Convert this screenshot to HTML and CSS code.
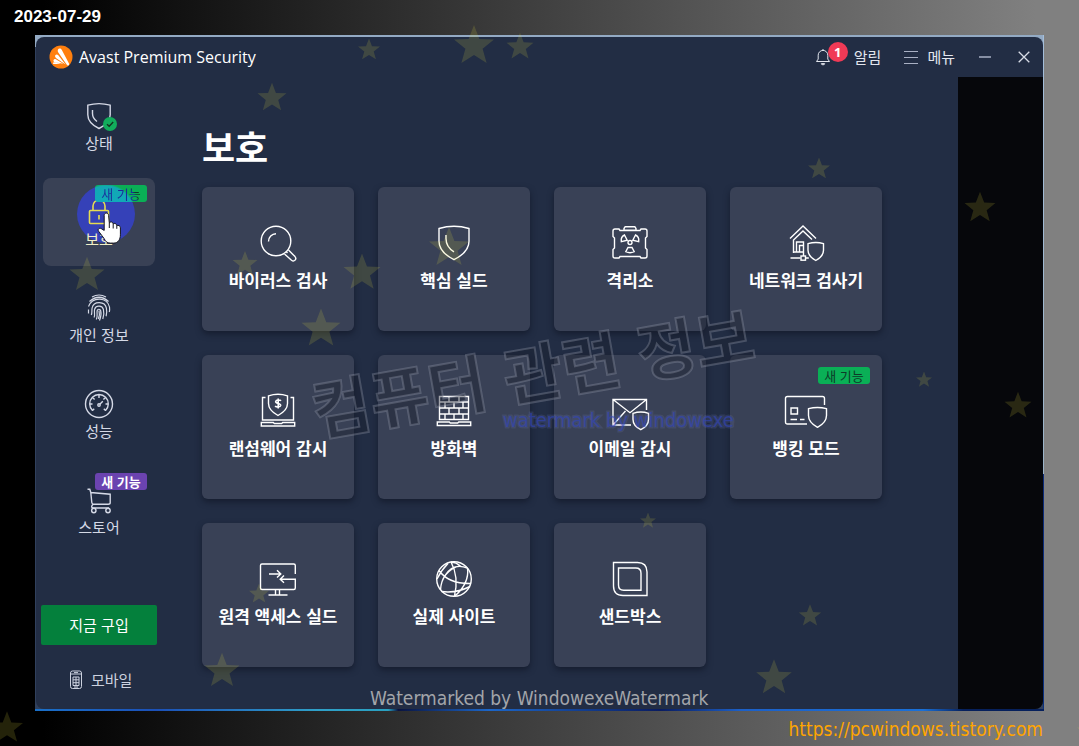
FILE: index.html
```html
<!DOCTYPE html>
<html lang="ko">
<head>
<meta charset="utf-8">
<title>Avast Premium Security</title>
<link rel="stylesheet" href="styles.css">
</head>
<body>
<header class="datebar"><time datetime="2023-07-29">2023-07-29</time></header>

<div class="frame">
<div class="window">
  <div class="titlebar">
    <svg class="logo" viewBox="0 0 24 24"><circle cx="12" cy="12" r="11.5" fill="#ff7f0e"/><path d="M9 4.600c.6-1.500 2.900-1.500 3.700.1l7.300 13.900c.8 1.600-1 2.400-2 1.300L9.300 7.500C8.700 6.600 8.600 5.500 9 4.600z" fill="#fff"/><path d="M6.300 10.300c.7-1 2-1 2.800-.2l7.400 9.300-9.200-6.200c-1-.7-1.600-1.900-1-2.900z" fill="#fff"/><path d="M4.600 14.900c.4-.8 1.300-1 2.200-.7l7.500 4.500-8.300-1.500c-1.200-.3-1.900-1.300-1.400-2.300z" fill="#fff"/><path d="M3.800 17.800c.6-.8 4.200-.7 7.800.7-2.800.5-5.900.6-7.200.6z" fill="#fff"/></svg>
    <span class="app-name">Avast Premium Security</span>
    <div class="tools">
      <button class="tool alerts">
        <svg class="bell" viewBox="0 0 16 18"><path d="M1.500 13.500h13l-1.700-2.400V7.200a4.800 4.800 0 0 0-9.600 0v3.900zM8 2.400V1M6.300 15.600a1.700 1.200 0 0 0 3.400 0z"/></svg>
        <span class="count">1</span>
        <span>알림</span>
      </button>
      <button class="tool menu"><svg class="bars" viewBox="0 0 14 14"><path d="M0 1.500h14M0 7.500h14M0 13.500h14"/></svg><span>메뉴</span></button>
      <button class="tool" aria-label="최소화"><svg class="sys" viewBox="0 0 12 12"><path d="M0 6h12"/></svg></button>
      <button class="tool" aria-label="닫기"><svg class="sys close" viewBox="0 0 12 12"><path d="M.7.7l10.600 10.600M11.300.7L.7 11.300"/></svg></button>
    </div>
  </div>

  <div class="body">
    <aside class="sidebar">
      <nav class="nav">
        <a class="item" href="#status">
          <svg class="nav-icon" viewBox="0 0 32 32"><path d="M4.800 5.200q11.200-3.200 22.400 0v9.500c0 6-4.700 10.600-11.200 13.800C9.500 25.300 4.800 20.700 4.800 14.700zM9.500 10v3.500c0 3.500 1.800 6 4.500 8"/><circle class="ok" cx="27" cy="24" r="7"/><path class="tick" d="M24 24.200l2.200 2 4-4.200"/></svg>
          <span>상태</span>
        </a>
        <a class="item active" href="#protection">
          <i class="halo"></i>
          <svg class="nav-icon lock" viewBox="0 0 32 32"><rect x="6.500" y="14.500" width="19" height="13" rx="1"/><path d="M10 14.500V10a6 6 0 0 1 12 0v4.500M16 19v4.500"/></svg>
          <span class="active-label">보호</span>
          <b class="badge lit"><span>새 기능</span></b>
          <svg class="pointer" viewBox="0 0 26 33"><path d="M7.200 18.400V3.500C7.200.3 11.300.3 11.600 3.300l.7 7.600c.8-1.500 3.700-1.200 3.900 1 1.200-1 3.500-.4 3.500 1.700 1.500-.8 3.700.1 3.700 2.200v7c0 4.700-2.400 8.300-6.700 8.300h-3.200c-3.700 0-5-1.800-6.500-4.700L1.600 19.200c-1.300-2 .8-3.700 2.700-2.500z"/><path class="knuckle" d="M12.300 11v5M16.200 12v4.500M19.800 13.800v3"/></svg>
        </a>
        <a class="item" href="#privacy">
          <svg class="nav-icon print" viewBox="0 0 32 32"><path d="M9 5q7-4 14 0M6.500 9.500q9.500-8.500 19 0M5.500 14.500c4-10.500 19-9.500 21 .5.200 1.500.2 3.500-.2 5M5.500 17.500v4M8.300 23c1-2 .3-4.500.8-7 1.600-7.500 13-7 14.300.2.600 3.200.4 5.800-.3 8M11 25.500c1.500-2.500-.3-5.500.7-8.500 1.500-4.200 7.700-3.600 8.700.4 1 4 .5 6.500-.6 9.600M13.300 27.500c1.800-3 .2-6 .9-9 .5-1.800 3-1.600 3.500.2.800 3.300.3 6.300-1.200 9.800M16 18.500c.8 3 .5 6-.7 8.500"/></svg>
          <span>개인 정보</span>
        </a>
        <a class="item" href="#performance">
          <svg class="nav-icon" viewBox="0 0 32 32"><circle cx="16" cy="16" r="13.500"/><path d="M9.500 22.500a9.300 9.300 0 1 1 13 0M16 7v3M9.600 9.600l2 2M22.400 9.600l-2 2M6.800 16h2.700M25.200 16h-2.700M9.500 22.500l1.700-1.700M22.500 22.500l-1.700-1.700M16.800 16.300l3-3"/><circle cx="16" cy="17" r="1.200"/></svg>
          <span>성능</span>
        </a>
        <a class="item" href="#store">
          <svg class="nav-icon" viewBox="0 0 32 32"><path d="M4.500 5.300h2.300l1 3.200 19.400 1.700v8.500q0 1.500-2 1.500H10.500q-1.500 0-1.700-1.700L7.800 8.500M10 20.200q-3 3.500.5 3.800H26"/><circle cx="10.800" cy="26.500" r="2.200"/><circle cx="25" cy="26.500" r="2.200"/></svg>
          <span>스토어</span>
          <b class="badge violet">새 기능</b>
        </a>
      </nav>
      <button class="buy">지금 구입</button>
      <a class="mobile" href="#mobile">
        <svg class="phone" viewBox="0 0 14 20"><rect x="1.500" y="1" width="11" height="17.500" rx="2"/><path d="M2 4h10M4 7h6v8.500H4zM4 9.800h6M4 12.700h6M7 7v8.500M5 2.600h4M5 17h4"/></svg>
        <span>모바일</span>
      </a>
    </aside>

    <main class="main">
      <h1>보호</h1>
      <div class="cards">
        <button class="card">
          <svg class="icon" viewBox="0 0 40 40"><circle cx="18" cy="18" r="14.800"/><path d="M10.500 18.500a7.800 7.800 0 0 1 7.500-7.800M26.500 31l7 6.300c2.700 2 5.700-1.200 3.500-3.700L30.500 27M28 28.500l1.500 1.500"/></svg>
          <span>바이러스 검사</span>
        </button>
        <button class="card">
          <svg class="icon" viewBox="0 0 40 40"><path d="M5 5.500q15-4.500 30 0v12.800c0 8-6.300 14-15 18.300C11.300 32.300 5 26.300 5 18.300zM12 12v3.500c0 6 3.300 10.500 8 13.300"/></svg>
          <span>핵심 실드</span>
        </button>
        <button class="card">
          <svg class="icon" viewBox="0 0 40 40"><path d="M14 5.500l1.200-1.800h9.600L26 5.500v1.700H14zM10 7.500h20l1-1.500h4q2 0 2 2v5.500l-1.500 1.500v10l1.500 1.500V33q0 2-2 2h-4l-1-1.500H10L9 35H5q-2 0-2-2v-6.500L4.500 25V15L3 13.500V8q0-2 2-2h4z"/><circle cx="20" cy="19.500" r="2"/><path d="M14.500 12l2.700 5.200-5.900 1.500c-.5-3 .7-5.500 3.200-6.700zM25.500 12l-2.700 5.200 5.900 1.500c.5-3-.7-5.500-3.200-6.700zM18 24.500h4l2.200 4.200q-4.200 2-8.400 0z"/></svg>
          <span>격리소</span>
        </button>
        <button class="card">
          <svg class="icon" viewBox="0 0 40 40"><path d="M4 15.500L17 3l13 12.500M7.500 30V17L17 8l9 8.500M7.500 29H18M10.500 29V19h7v10M13.500 29v-6.500h3.800M17.500 29v4M4.500 35h10M19.800 35h3"/><rect x="15" y="33" width="4.500" height="4.200"/><path d="M22 20.700q8-2.500 15.500 0v6.500c0 4.500-3 7.800-7.700 10.300-4.700-2.500-7.800-5.800-7.800-10.300z"/></svg>
          <span>네트워크 검사기</span>
        </button>
        <button class="card">
          <svg class="icon" viewBox="0 0 40 40"><path d="M7.500 6.500H4.500V29h31V6.500h-3M10.500 4.800q9.500-3 19 0v7.700c0 5.300-4 9-9.500 12-5.500-3-9.500-6.700-9.500-12zM3.300 31.500h12l1 1h7.400l1-1h12V35H3.300z"/><path class="heavy" d="M23 9.800c-.8-1-4.800-1.300-5.300.6-.5 2.500 5.200 1.600 5 4-.3 2-4.500 1.900-5.600.5M20.200 7.500v10"/></svg>
          <span>랜섬웨어 감시</span>
        </button>
        <button class="card">
          <svg class="icon" viewBox="0 0 40 40"><path d="M5.500 5.500h29v23h-29zM5.500 11h29M5.500 17h29M5.500 23h29M15 5.500V11M25 5.500V11M11 11v6M20 11v6M29 11v6M15 17v6M25 17v6M11 23v5.500M20 23v5.500M29 23v5.500M3.300 31h12l1 1h7.400l1-1h12v3.500H3.300z"/></svg>
          <span>방화벽</span>
        </button>
        <button class="card">
          <svg class="icon" viewBox="0 0 40 40"><path d="M21 34H3V8.500h33.500V19M3 8.500l17 13.200L36.500 8.500M3 34l12.500-14"/><path d="M23 22.300q8-2.500 15.500 0v6.200c0 4.500-3 7.800-7.700 10.200C26 36.300 23 33 23 28.500z"/></svg>
          <span>이메일 감시</span>
        </button>
        <button class="card">
          <svg class="icon wide" viewBox="0 0 44 40"><path d="M23 33H3.500q-2 0-2-2V7.500q0-2 2-2h35q2 0 2 2V14M7 17h6.500v6H7zM6.500 28.500H13M16 28.500h4.500"/><path d="M24.500 17.700q9-2.500 18 0v6.800c0 5.300-3.800 9-9 11.800-5.200-2.800-9-6.500-9-11.800z"/></svg>
          <span>뱅킹 모드</span>
          <b class="badge green">새 기능</b>
        </button>
        <button class="card">
          <svg class="icon" viewBox="0 0 40 40"><path d="M37.300 15V6.500q0-1.500-1.500-1.500H4q-1.500 0-1.500 1.500V29q0 1.500 1.500 1.500h31.800q1.500 0 1.500-1.500v-8.800H22.500M26 16.500l-3.800 3.700 3.800 3.600M11 15h11.500M19 11.300l3.800 3.700-3.800 3.600M17.500 30.500v5M21.500 30.500v5M10.500 36h19"/></svg>
          <span>원격 액세스 실드</span>
        </button>
        <button class="card">
          <svg class="icon" viewBox="0 0 40 40"><circle cx="20" cy="20" r="17.300"/><path d="M17 3q8 14.500 3.500 34.200M17 3q5.500.5 9 3.700Q7.500 12.500 6.500 31M33.500 9Q19 3.500 11 16.500M5 11.500Q14.500 25 37 24.500M36 27.500q-14 7-28.500 5M33.500 9q2 15-12.500 28M3 20q4-8.500 11-15.500"/></svg>
          <span>실제 사이트</span>
        </button>
        <button class="card">
          <svg class="icon" viewBox="0 0 40 40"><path d="M3.500 3.500h24q9.500 0 9.500 9.500v23.500H13q-9.500 0-9.500-9.500z"/><path d="M8.500 9h17.300q5.200 0 5.200 5.200v17H13.700q-5.200 0-5.200-5.200z"/></svg>
          <span>샌드박스</span>
        </button>
      </div>
    </main>
    <div class="shade"></div>
  </div>
</div>
</div>

<footer class="source"><a href="https://pcwindows.tistory.com">https://pcwindows.tistory.com</a></footer>

<svg class="overlay" width="1079" height="746" viewBox="0 0 1079 746">
  <defs><path id="star" d="M0-10.500L2.700-3.500 10-3.200 4.300 1.400 6.300 8.500 0 4.500-6.300 8.500-4.300 1.400-10-3.200-2.700-3.500z"/></defs>
  <g class="stars">
    <use href="#star" transform="translate(369 50) scale(1.100)"/>
    <use href="#star" transform="translate(474 46) scale(2)"/>
    <use href="#star" transform="translate(520 47) scale(1.350)"/>
    <use href="#star" transform="translate(272 98) scale(1.450)"/>
    <use href="#star" transform="translate(819 169) scale(1.100)"/>
    <use href="#star" transform="translate(980 208) scale(1.550)"/>
    <use href="#star" transform="translate(87 275) scale(1.750)"/>
    <use href="#star" transform="translate(245 264) scale(1.250)"/>
    <use href="#star" transform="translate(362 273) scale(1.850)"/>
    <use href="#star" transform="translate(321 329) scale(1.950)"/>
    <use href="#star" transform="translate(449 248) scale(2)"/>
    <use href="#star" transform="translate(924 380) scale(.8)"/>
    <use href="#star" transform="translate(1018 406) scale(1.350)"/>
    <use href="#star" transform="translate(648 521) scale(.8)"/>
    <use href="#star" transform="translate(259 594) scale(1)"/>
    <use href="#star" transform="translate(222 671) scale(1.750)"/>
    <use href="#star" transform="translate(810 616) scale(1.120)"/>
    <use href="#star" transform="translate(774 678) scale(1.780)"/>
    <use href="#star" transform="translate(7 728) scale(1.600)"/>
    <use href="#star" transform="translate(1088 617) scale(1)"/>
    <use href="#star" transform="translate(1091 732) scale(1.400)"/>
  </g>
  <text class="mark-big" transform="translate(537 397) rotate(-10)" text-anchor="middle">컴퓨터 관련 정보</text>
  <text class="mark-blue" x="503" y="427">watermark by windowexe</text>
  <text class="mark-line" x="370" y="705">Watermarked by WindowexeWatermark</text>
</svg>
</body>
</html>
```

FILE: styles.css
```css
* { box-sizing: border-box; }

body {
  margin: 0;
  min-height: 100vh;
  display: flex;
  flex-direction: column;
  position: relative;
  overflow: hidden;
  color: #e3e6ee;
  font: 15px/22px "Noto Sans CJK KR", sans-serif;
  background: linear-gradient(90deg, #000 0, #000 4%, #808080 96%, #808080 100%);
}

button {
  font: inherit;
  color: inherit;
  border: 0;
  background: none;
  padding: 0;
}

a { color: inherit; text-decoration: none; }

svg { fill: none; stroke: currentColor; flex: none; }

.datebar {
  height: 35px;
  padding: 6px 14px;
  color: #fff;
  font: bold 17px/22px "Liberation Sans", sans-serif;
}

.frame {
  flex: 1;
  display: flex;
  margin: 0 35px;
  padding: 2px 1px;
  background:
    linear-gradient(90deg, #1a70c8, #1b50b8 12%, #2fa0c8 28%, #2aa0c0 35%, #0a1440 36%, #1c66c8 45%, #0a1c60 62%, #1c60c8 70%, #1a70d8 88%, #06205c 92%) bottom / 100% 2px no-repeat,
    linear-gradient(#a4bedb, #9cb4c8 65%, #0c2a78 65%, #0a3080) right / 1px 100% no-repeat,
    linear-gradient(#93aac4, #93aac4) top / 100% 12px no-repeat,
    #30405c;
}

.window {
  flex: 1;
  display: flex;
  flex-direction: column;
  overflow: hidden;
  border-radius: 8px;
  background: #222d44;
}

.titlebar {
  display: flex;
  align-items: center;
  height: 40px;
  padding: 0 13px 0 13px;
}

.logo { width: 24px; height: 24px; stroke: none; }

.app-name {
  margin-left: 6px;
  color: #fff;
  font: 16px/24px "Open Sans", "Noto Sans", sans-serif;
}

.tools { display: flex; align-items: center; margin-left: auto; line-height: 20px; }
.tool { display: flex; align-items: center; margin-left: 24px; }
.alerts { position: relative; gap: 23px; margin-left: 0; }
.bell { width: 16px; height: 18px; }

.count {
  position: absolute;
  left: 13px;
  top: -5px;
  width: 20px;
  height: 20px;
  border-radius: 50%;
  background: #f03a56;
  color: #fff;
  font: bold 13px/20px "Noto Sans", sans-serif;
  text-align: center;
}

.menu { gap: 9px; margin-left: 23px; }
.bars { width: 14px; height: 14px; color: #a9b0c4; }
.sys { width: 12px; height: 12px; color: #a9b0c4; stroke-width: 1.3; }
.close { color: #d8dce6; margin-left: 3px; }

.body { flex: 1; display: flex; }

.sidebar {
  width: 127px;
  display: flex;
  flex-direction: column;
  padding: 5px 6px 18px 5px;
}

.nav { display: flex; flex-direction: column; gap: 8px; padding: 0 2px; }

.item {
  position: relative;
  height: 88px;
  padding-top: 18px;
  display: flex;
  flex-direction: column;
  align-items: center;
  border-radius: 8px;
  color: #d5d9e6;
}

.active { background: #394155; }
.nav-icon { position: relative; width: 32px; height: 32px; stroke-width: 1.4; overflow: visible; }
.ok { fill: #12ad5c; stroke: none; }
.tick { stroke: #12351f; }
.print { stroke-width: 1.2; }

.halo {
  position: absolute;
  left: 34px;
  top: 7px;
  width: 58px;
  height: 58px;
  border-radius: 50%;
  background: #3541b8;
}

.lock { color: #e6dc50; stroke-width: 1.6; }
.active-label { position: relative; color: #f2f0c8; }

.badge {
  position: absolute;
  top: 7px;
  right: 8px;
  width: 52px;
  border-radius: 3px;
  font-weight: 400;
  font-size: 13px;
  line-height: 17px;
  text-align: center;
}

.green { top: 12px; right: 12px; background: #0aaf56; color: #0d3a28; }
.violet { background: #6b43b0; color: #fff; font-weight: 700; }
.lit { background: radial-gradient(circle at 11px 29px, #10acc0 0, #12a8b4 28px, #0aaf56 30px); }

.lit span {
  color: transparent;
  background: radial-gradient(circle at 2px 29px, #1a2c9c 0, #1a2c9c 36px, #0d3a28 38px);
  -webkit-background-clip: text;
  background-clip: text;
}

.pointer {
  position: absolute;
  left: 54px;
  top: 34px;
  width: 26px;
  height: 33px;
  fill: #fff;
  stroke: #15151c;
  stroke-width: 1;
}

.knuckle { fill: none; }

.buy {
  height: 40px;
  margin-top: auto;
  border-radius: 2px;
  background: #04803c;
  color: #fff;
  font-size: 15px;
}

.mobile {
  display: flex;
  align-items: center;
  gap: 8px;
  margin-top: 24px;
  padding-left: 28px;
  color: #ccd1df;
}

.phone { width: 14px; height: 20px; }

.main { flex: 1; padding: 43px 24px 42px 39px; }

h1 {
  margin: 0 0 15px;
  color: #fff;
  font-size: 36px;
  line-height: 52px;
}

.cards {
  display: grid;
  grid-template-columns: repeat(auto-fill, 152px);
  gap: 24px;
}

.card {
  position: relative;
  height: 144px;
  padding-top: 36px;
  display: flex;
  flex-direction: column;
  align-items: center;
  gap: 5px;
  border-radius: 6px;
  background: #394156;
  box-shadow: 0 3px 6px rgba(14, 19, 34, .6);
  color: #fff;
  font-size: 17px;
  font-weight: 700;
  line-height: 24px;
}

.icon { width: 40px; height: 40px; stroke-width: 1.4; }
.wide { width: 44px; }
.heavy { stroke-width: 1.6; }

.shade { width: 85px; background: #06070b; }

.source {
  height: 35px;
  padding: 5px 36px;
  text-align: right;
  color: #ffa500;
  font: 19px/26px "DejaVu Sans Condensed", "Noto Sans", sans-serif;
}

.overlay {
  position: absolute;
  left: 0;
  top: 0;
  pointer-events: none;
}

.overlay text, .stars { stroke: none; }
.stars { fill: rgba(225, 215, 60, .16); }

.overlay .mark-big {
  font: 700 64px "Noto Sans CJK KR", sans-serif;
  fill: rgba(25, 29, 45, .4);
  stroke: rgba(150, 154, 172, .35);
  stroke-width: 2;
}

.overlay .mark-blue {
  font: 20px "DejaVu Sans Condensed", "Noto Sans", sans-serif;
  fill: rgba(48, 68, 190, .6);
  stroke: rgba(110, 120, 190, .2);
  stroke-width: 3;
  paint-order: stroke;
}

.mark-line {
  font: 19px "DejaVu Sans Condensed", "Noto Sans", sans-serif;
  fill: #a3a5aa;
}
```
